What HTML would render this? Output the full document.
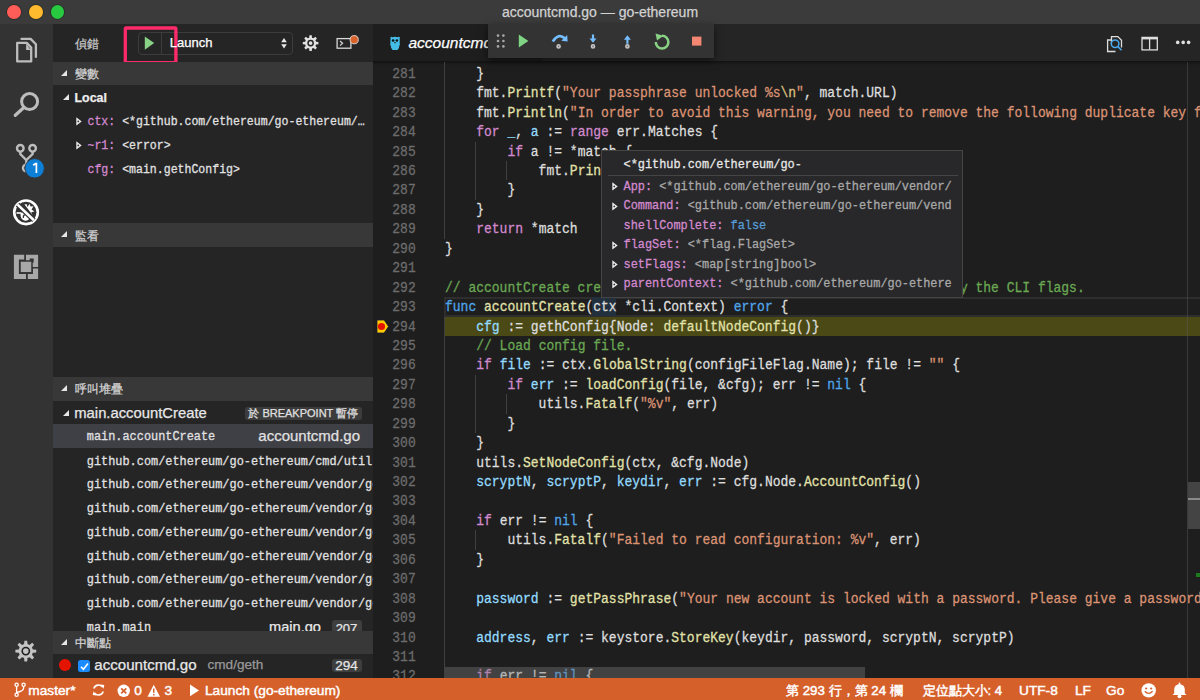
<!DOCTYPE html>
<html><head><meta charset="utf-8">
<style>
*{margin:0;padding:0;box-sizing:border-box}
html,body{width:1200px;height:700px;overflow:hidden;background:#1e1e1e;font-family:"Liberation Sans",sans-serif;}
body *{-webkit-text-stroke:0.25px currentColor}
.abs{position:absolute}
#title{left:0;top:0;width:1200px;height:24px;background:#3b3b3b;}
.tl{position:absolute;top:5px;width:13.5px;height:13.5px;border-radius:50%;box-shadow:0 0 0 0.7px rgba(0,0,0,0.35)}
#ttext{position:absolute;left:0;width:1200px;top:4px;text-align:center;color:#d2d2d2;font-size:14px;line-height:16px}
#act{left:0;top:24px;width:53px;height:654px;background:#333333}
#side{left:53px;top:24px;width:320px;height:654px;background:#252526;overflow:hidden}
.sh{position:absolute;left:0;width:320px;height:23.5px;background:#383838;color:#d4d4d4;font-size:11.7px}
.sh .tri{position:absolute;left:8px;top:8px;width:0;height:0;border-left:6.5px solid transparent;border-bottom:6.5px solid #e6e6e6}
.sh .t{position:absolute;left:22px;top:4.3px;line-height:16px}
.row{position:absolute;left:0;width:320px;height:24px;line-height:24px;white-space:pre;color:#e2e2e2}
.row .abs,.hr .abs{top:0}
.sy{transform:scaleY(1.15)}
.mono{font-family:"Liberation Mono",monospace}
.vn{color:#d48ad0}
.tw{position:absolute;width:0;height:0;border-top:4.5px solid transparent;border-bottom:4.5px solid transparent;border-left:6px solid #c5c5c5}
.tw:after{content:"";position:absolute;left:-4.5px;top:-2.5px;border-top:2.5px solid transparent;border-bottom:2.5px solid transparent;border-left:3px solid #252526}
.cs{font-size:11.9px}
#editor{left:373px;top:24px;width:827px;height:654px;background:#1e1e1e;overflow:hidden}
#tabs{left:0;top:0;width:827px;height:37.6px;background:#252526}
#tab{left:0;top:0;width:170px;height:37.6px;background:#1e1e1e}
.ln{position:absolute;left:445px;height:19.44px;line-height:19.44px;white-space:pre;font-family:"Liberation Mono",monospace;font-size:13px;color:#dedede;transform:translateY(0.6px) scaleY(1.16)}
.nm{position:absolute;left:373px;width:42.7px;text-align:right;height:19.44px;line-height:19.44px;font-family:"Liberation Mono",monospace;font-size:13px;color:#6c6c6c;transform:translateY(0.6px) scaleY(1.16)}
.k{color:#d48ad0}.b{color:#50a6ea}.s{color:#dc9374}.f{color:#e2e2aa}.v{color:#94dcff}.c{color:#6aa853}.e{color:#dfc080}
.g{position:absolute;width:1px;background:#404040}
#status{left:0;top:678px;width:1200px;height:24px;background:#d6602a;color:#ffffff;font-size:13.7px}
#status span{position:absolute;top:3.5px;line-height:18px;white-space:pre;-webkit-text-stroke:0.45px #fff}
#hover{left:601px;top:150px;width:362px;height:148px;background:#28282a;border:1px solid #454545;overflow:hidden}
.hr{position:absolute;left:0;width:360px;height:19.5px;line-height:19.5px;white-space:pre;font-family:"Liberation Mono",monospace;font-size:11.9px;color:#a9a9a9}
.hr .tw:after{border-left-color:#252526}
#dbg{left:488px;top:24px;width:226px;height:34px;background:#333333;box-shadow:0 3px 8px rgba(0,0,0,0.55)}
.badge{position:absolute;background:#3e3e3e;color:#e6e6e6;border-radius:3px;font-size:12.5px;line-height:16px;text-align:center}
</style></head><body>
<div id="title" class="abs">
  <div class="tl" style="left:7.3px;background:#fe5e57"></div>
  <div class="tl" style="left:29px;background:#feba2e"></div>
  <div class="tl" style="left:50.6px;background:#28c840"></div>
  <div id="ttext">accountcmd.go — go-ethereum</div>
</div>

<div id="act" class="abs"></div>
<svg class="abs" style="left:0;top:0" width="54" height="700" viewBox="0 0 54 700">
  <g fill="none" stroke="#bdbdbd" stroke-width="2.3" stroke-linejoin="round" stroke-linecap="round">
    <!-- explorer -->
    <path d="M21.5,38.9 H30.6 L35.9,44.3 V56.9"/>
    <path d="M17.2,42.9 H26.7 L31.2,47.6 V61.4 H17.2 Z"/>
  </g>
  <path d="M26.1,43.4 V50 H30.6 Z" fill="#bdbdbd"/>
  <!-- search -->
  <circle cx="29.6" cy="101.5" r="8" fill="none" stroke="#bdbdbd" stroke-width="3"/>
  <line x1="23.6" y1="107.7" x2="15.3" y2="115.3" stroke="#bdbdbd" stroke-width="3.2" stroke-linecap="round"/>
  <!-- git -->
  <g fill="none" stroke="#bdbdbd" stroke-width="2.4">
    <circle cx="20.3" cy="148.3" r="3.3"/>
    <circle cx="32.6" cy="148.3" r="3.3"/>
    <path d="M20.3,151.6 V154 L26.3,160 L32.6,154 V151.6 M26.3,160 V164.5"/>
    <circle cx="26.3" cy="168" r="3.3"/>
  </g>
  <circle cx="34.6" cy="168.3" r="9.7" fill="#0e7fd6" stroke="#333" stroke-width="0.8"/>
  <path d="M33.2,165.3 L35.6,163.6 H36.4 V173" fill="none" stroke="#fff" stroke-width="1.7"/>
  <!-- debug -->
  <circle cx="26" cy="212.3" r="11.8" fill="none" stroke="#ffffff" stroke-width="2.6"/>
  <path d="M20.5,214.5 Q21,211.5 24,211.8 L29.5,217.5 Q28.8,221 25,220.8 Q20.6,220 20.5,214.5 Z" fill="#ffffff"/>
  <path d="M23.5,218 Q22.8,215.5 24.8,214.6" fill="none" stroke="#333" stroke-width="1.2"/>
  <path d="M16.5,213 H21" stroke="#ffffff" stroke-width="1.6"/>
  <path d="M24.5,204.5 L26.5,204 L27.5,207 L29.5,203.8 L30.5,206.5 L33.5,206.3 L31.5,209.5 L34.5,211.5 L31.2,212.3 L32.5,215 Z" fill="#ffffff"/>
  <line x1="17.6" y1="204.6" x2="33.9" y2="220.3" stroke="#333333" stroke-width="5"/>
  <line x1="17.6" y1="204.6" x2="33.9" y2="220.3" stroke="#ffffff" stroke-width="2.6"/>
  <!-- extensions -->
  <g fill="#a8a8a8">
    <path d="M13.9,254.8 H24.2 V259.6 H18.9 V274 H26 V279 H13.9 Z"/>
    <path d="M26,254.8 H38.1 V266.9 H26 Z M29.7,258.5 V262.4 H33.7 V258.5 Z" fill-rule="evenodd"/>
    <path d="M32.9,268.5 H38.1 V279 H27.8 V274 H32.9 Z"/>
    <rect x="20" y="261" width="12" height="11.8" stroke="#333333" stroke-width="1.5"/>
  </g>
  <!-- gear -->
  <g transform="translate(25.8,651.1)">
    <path d="M-1.71,-6.99 L-1.36,-10.41 L1.36,-10.41 L1.71,-6.99 L3.74,-6.16 L6.40,-8.32 L8.32,-6.40 L6.16,-3.74 L6.99,-1.71 L10.41,-1.36 L10.41,1.36 L6.99,1.71 L6.16,3.74 L8.32,6.40 L6.40,8.32 L3.74,6.16 L1.71,6.99 L1.36,10.41 L-1.36,10.41 L-1.71,6.99 L-3.74,6.16 L-6.40,8.32 L-8.32,6.40 L-6.16,3.74 L-6.99,1.71 L-10.41,1.36 L-10.41,-1.36 L-6.99,-1.71 L-6.16,-3.74 L-8.32,-6.40 L-6.40,-8.32 L-3.74,-6.16 Z" fill="#c4c4c4"/>
    <circle r="3.6" fill="none" stroke="#1e1e1e" stroke-width="1.6"/>
  </g>
</svg>

<div id="side" class="abs">
  <div class="abs" style="left:22px;top:11.8px;color:#c4c4c4;font-size:11.6px;line-height:16px">偵錯</div>
  <!-- dropdown -->
  <div class="abs" style="left:84.8px;top:7.5px;width:155.3px;height:23.2px;border:1px solid #3c3c3c;border-radius:4px"></div>
  <div class="abs" style="left:107.5px;top:8px;width:1px;height:22.5px;background:#3c3c3c"></div>
  <svg class="abs" style="left:0;top:0" width="320" height="40" viewBox="0 0 320 40">
    <path d="M91.8,12.5 L101.2,19 L91.8,25.7 Z" fill="#89d185"/>
    <path d="M228.2,18.2 L231,14 L233.8,18.2 Z M228.2,20.3 L233.8,20.3 L231,24.4 Z" fill="#e8e8e8"/>
    <g transform="translate(257.6,19.1)">
      <path d="M-1.39,-5.43 L-1.18,-7.81 L1.18,-7.81 L1.39,-5.43 L2.86,-4.82 L4.69,-6.36 L6.36,-4.69 L4.82,-2.86 L5.43,-1.39 L7.81,-1.18 L7.81,1.18 L5.43,1.39 L4.82,2.86 L6.36,4.69 L4.69,6.36 L2.86,4.82 L1.39,5.43 L1.18,7.81 L-1.18,7.81 L-1.39,5.43 L-2.86,4.82 L-4.69,6.36 L-6.36,4.69 L-4.82,2.86 L-5.43,1.39 L-7.81,1.18 L-7.81,-1.18 L-5.43,-1.39 L-4.82,-2.86 L-6.36,-4.69 L-4.69,-6.36 L-2.86,-4.82 Z" fill="#e2e2e2"/>
      <circle r="2.6" fill="none" stroke="#252526" stroke-width="1.5"/>
    </g>
    <rect x="284.1" y="14.6" width="13.8" height="9.6" fill="none" stroke="#d8d8d8" stroke-width="1.3"/>
    <path d="M287,17 L289.6,19.3 L287,21.6" fill="none" stroke="#d8d8d8" stroke-width="1.2"/>
    <circle cx="301.2" cy="15.7" r="4.1" fill="#d9622b" stroke="#e0e0e0" stroke-width="0.9"/>
    <rect x="72.3" y="4" width="50.6" height="34.6" rx="1" fill="none" stroke="#ff2a6a" stroke-width="3.3"/>
  </svg>
  <div class="abs" style="left:116.8px;top:11px;color:#ffffff;font-size:13px;line-height:16px">Launch</div>

  <div class="sh" style="top:37.5px"><div class="tri"></div><div class="t">變數</div></div>
  <div class="row" style="top:61.3px;"><div class="abs" style="left:9.5px;top:9px;width:0;height:0;border-left:6.5px solid transparent;border-bottom:6.5px solid #e6e6e6"></div><span class="abs" style="left:21.5px;top:0.8px;font-weight:bold;font-size:12.4px;color:#eeeeee">Local</span></div>
  <div class="row mono" style="top:85.3px;font-size:11.55px"><svg class="abs" style="left:23px;top:7.3px" width="7" height="10" viewBox="0 0 7 10"><path d="M0.3,0.3 L5.7,4.4 L0.3,8.5 Z" fill="#eeeeee"/><circle cx="2.3" cy="4.4" r="0.9" fill="#333"/></svg><span class="abs sy" style="left:34.5px;top:1px"><span class="vn">ctx:</span> &lt;*github.com/ethereum/go-ethereum/…</span></div>
  <div class="row mono" style="top:109.3px;font-size:11.55px"><svg class="abs" style="left:23px;top:7.3px" width="7" height="10" viewBox="0 0 7 10"><path d="M0.3,0.3 L5.7,4.4 L0.3,8.5 Z" fill="#eeeeee"/><circle cx="2.3" cy="4.4" r="0.9" fill="#333"/></svg><span class="abs sy" style="left:34.5px;top:1px"><span class="vn">~r1:</span> &lt;error&gt;</span></div>
  <div class="row mono" style="top:133.3px;font-size:11.55px"><span class="abs sy" style="left:34.5px;top:1px"><span class="vn">cfg:</span> &lt;main.gethConfig&gt;</span></div>

  <div class="sh" style="top:199.3px"><div class="tri"></div><div class="t">監看</div></div>

  <div class="sh" style="top:353px"><div class="tri"></div><div class="t">呼叫堆疊</div></div>
  <div class="row" style="top:377.3px"><div class="abs" style="left:9.5px;top:9px;width:0;height:0;border-left:6.5px solid transparent;border-bottom:6.5px solid #e6e6e6"></div><span class="abs" style="left:21.3px;font-size:14.8px;color:#e8e8e8">main.accountCreate</span>
    <div class="abs" style="left:192px;top:6px;width:116.5px;height:12.8px;background:#3c3c3c;border-radius:2.5px;color:#e0e0e0;font-size:11px;line-height:12.8px;text-align:center">於 BREAKPOINT 暫停</div></div>
  <div class="row" style="top:400.1px;height:23.9px;background:#3f3f46"><span class="abs mono cs sy" style="left:33.8px;top:0.7px">main.accountCreate</span><span class="abs" style="left:205.3px;font-size:15px;color:#e0e0e0">accountcmd.go</span></div>
  <div class="row mono cs" style="top:425.6px"><span class="abs sy" style="left:33.8px">github.com/ethereum/go-ethereum/cmd/utils.MigrateFlags.func1</span></div>
  <div class="row mono cs" style="top:449.3px"><span class="abs sy" style="left:33.8px">github.com/ethereum/go-ethereum/vendor/gopkg.in/urfave/cli%2ev1.HandleAction</span></div>
  <div class="row mono cs" style="top:473.1px"><span class="abs sy" style="left:33.8px">github.com/ethereum/go-ethereum/vendor/gopkg.in/urfave/cli%2ev1.Command.Run</span></div>
  <div class="row mono cs" style="top:496.8px"><span class="abs sy" style="left:33.8px">github.com/ethereum/go-ethereum/vendor/gopkg.in/urfave/cli%2ev1.(*App).RunAsSubcommand</span></div>
  <div class="row mono cs" style="top:520.6px"><span class="abs sy" style="left:33.8px">github.com/ethereum/go-ethereum/vendor/gopkg.in/urfave/cli%2ev1.Command.startApp</span></div>
  <div class="row mono cs" style="top:544.3px"><span class="abs sy" style="left:33.8px">github.com/ethereum/go-ethereum/vendor/gopkg.in/urfave/cli%2ev1.Command.Run</span></div>
  <div class="row mono cs" style="top:568.1px"><span class="abs sy" style="left:33.8px">github.com/ethereum/go-ethereum/vendor/gopkg.in/urfave/cli%2ev1.(*App).Run</span></div>
  <div class="row mono cs" style="top:591.8px"><span class="abs sy" style="left:33.8px">main.main</span><span class="abs" style="left:216px;top:-0.8px;font-family:'Liberation Sans';font-size:14.6px;color:#e8e8e8">main.go</span><div class="badge" style="left:278.5px;top:4px;width:30px;height:17px;line-height:17px;font-family:'Liberation Sans';font-size:13px">207</div></div>

  <div class="sh" style="top:606.5px"><div class="tri"></div><div class="t">中斷點</div></div>
  <div class="row" style="top:630px;height:24px">
    <div class="abs" style="left:6px;top:5.3px;width:11.6px;height:11.6px;border-radius:50%;background:#e51400"></div>
    <div class="abs" style="left:24.5px;top:5.5px;width:12.8px;height:12.6px;border-radius:2.5px;background:#1a8cff"></div>
    <svg class="abs" style="left:24.5px;top:5.5px" width="13" height="13" viewBox="0 0 13 13"><path d="M3,6.8 L5.4,9.3 L10,3.6" fill="none" stroke="#fff" stroke-width="1.6"/></svg>
    <span class="abs" style="left:41.3px;top:-1px;font-size:15.1px;color:#e8e8e8">accountcmd.go</span>
    <span class="abs" style="left:154.5px;top:-1px;font-size:13.6px;color:#999999">cmd/geth</span>
    <div class="badge" style="left:278.5px;top:4.5px;width:30px;height:13.5px;line-height:13.5px;font-size:13.5px">294</div>
  </div>
</div>

<div id="editor" class="abs">
  <div id="tabs" class="abs"><div id="tab" class="abs"></div></div>
  <svg class="abs" style="left:0;top:0" width="827" height="40" viewBox="0 0 827 40">
    <path d="M17.6,14.5 Q16.6,13.2 18.2,12.9 Q19,12.6 19.6,13.3 Q22,12.3 24.6,13.3 Q25.4,12.6 26.3,12.9 Q27.6,13.4 26.6,14.6 Q27,17 26.6,19 L27.1,20.5 L26.5,21 Q26.3,24.5 24.5,25.9 L19.6,25.9 Q17.8,24.5 17.6,21 L17,20.5 L17.5,19 Q17.2,17 17.6,14.5 Z" fill="#45bce6"/>
    <circle cx="20.1" cy="16.5" r="1.3" fill="#111"/><circle cx="23.9" cy="16.5" r="1.3" fill="#111"/>
    <ellipse cx="22" cy="18.7" rx="0.9" ry="0.6" fill="#222"/>
    <g fill="none" stroke="#dddddd" stroke-width="1.3">
      <path d="M738.5,16 H734.6 V27.5 H742.5"/>
      <path d="M738.5,20 V12.6 H744.8 L748.5,16.3 V23.5"/>
    </g>
    <circle cx="742.1" cy="19.7" r="3.8" fill="#252526" stroke="#4aa9f0" stroke-width="1.5"/>
    <line x1="744.8" y1="22.5" x2="748.5" y2="26.3" stroke="#4aa9f0" stroke-width="1.6"/>
    <rect x="769" y="13.4" width="15.3" height="12.5" fill="none" stroke="#dddddd" stroke-width="1.3"/>
    <rect x="769" y="13.4" width="15.3" height="2" fill="#dddddd"/>
    <line x1="776.6" y1="14" x2="776.6" y2="25.5" stroke="#dddddd" stroke-width="1.3"/>
    <circle cx="804.7" cy="18.4" r="1.8" fill="#e0e0e0"/><circle cx="810.2" cy="18.4" r="1.8" fill="#e0e0e0"/><circle cx="815.6" cy="18.4" r="1.8" fill="#e0e0e0"/>
  </svg>
  <div class="abs" style="left:35.5px;top:9.5px;color:#ffffff;font-style:italic;font-size:15.5px;line-height:18px;white-space:pre">accountcmd.go</div>
  <div class="abs" style="left:0;top:37.1px;width:827px;height:1.3px;background:#141414"></div><div class="abs" style="left:0;top:38.4px;width:827px;height:2.5px;background:linear-gradient(rgba(0,0,0,0.3),rgba(0,0,0,0))"></div>

  <div class="abs" id="code" style="left:-373px;top:-24px;width:1200px;height:702px">
<div class="g" style="left:443.70px;top:61.50px;height:21.74px"></div>
<div class="g" style="left:443.70px;top:83.24px;height:19.44px"></div>
<div class="g" style="left:443.70px;top:102.68px;height:19.44px"></div>
<div class="g" style="left:443.70px;top:122.12px;height:19.44px"></div>
<div class="g" style="left:443.70px;top:141.56px;height:19.44px"></div>
<div class="g" style="left:474.90px;top:141.56px;height:19.44px"></div>
<div class="g" style="left:443.70px;top:161.00px;height:19.44px"></div>
<div class="g" style="left:474.90px;top:161.00px;height:19.44px"></div>
<div class="g" style="left:506.11px;top:161.00px;height:19.44px"></div>
<div class="g" style="left:443.70px;top:180.44px;height:19.44px"></div>
<div class="g" style="left:474.90px;top:180.44px;height:19.44px"></div>
<div class="g" style="left:443.70px;top:199.88px;height:19.44px"></div>
<div class="g" style="left:443.70px;top:219.32px;height:19.44px"></div>
<div class="g" style="left:443.70px;top:316.52px;height:19.44px"></div>
<div class="g" style="left:443.70px;top:335.96px;height:19.44px"></div>
<div class="g" style="left:443.70px;top:355.40px;height:19.44px"></div>
<div class="g" style="left:443.70px;top:374.84px;height:19.44px"></div>
<div class="g" style="left:474.90px;top:374.84px;height:19.44px"></div>
<div class="g" style="left:443.70px;top:394.28px;height:19.44px"></div>
<div class="g" style="left:474.90px;top:394.28px;height:19.44px"></div>
<div class="g" style="left:506.11px;top:394.28px;height:19.44px"></div>
<div class="g" style="left:443.70px;top:413.72px;height:19.44px"></div>
<div class="g" style="left:474.90px;top:413.72px;height:19.44px"></div>
<div class="g" style="left:443.70px;top:433.16px;height:19.44px"></div>
<div class="g" style="left:443.70px;top:452.60px;height:19.44px"></div>
<div class="g" style="left:443.70px;top:472.04px;height:19.44px"></div>
<div class="g" style="left:443.70px;top:491.48px;height:19.44px"></div>
<div class="g" style="left:443.70px;top:510.92px;height:19.44px"></div>
<div class="g" style="left:443.70px;top:530.36px;height:19.44px"></div>
<div class="g" style="left:474.90px;top:530.36px;height:19.44px"></div>
<div class="g" style="left:443.70px;top:549.80px;height:19.44px"></div>
<div class="g" style="left:443.70px;top:569.24px;height:19.44px"></div>
<div class="g" style="left:443.70px;top:588.68px;height:19.44px"></div>
<div class="g" style="left:443.70px;top:608.12px;height:19.44px"></div>
<div class="g" style="left:443.70px;top:627.56px;height:19.44px"></div>
<div class="g" style="left:443.70px;top:647.00px;height:19.44px"></div>
<div class="g" style="left:443.70px;top:666.44px;height:19.44px"></div>
<div class="abs" style="left:444px;top:297.08px;width:756px;height:19.44px;border:2px solid #2e2e2e;border-right:none"></div>
<div class="abs" style="left:444.5px;top:316.52px;width:755.5px;height:19.44px;background:#4b4a16"></div>
<div class="abs" style="left:592px;top:297px;width:23.8px;height:19px;background:#22303d"></div>
<svg class="abs" style="left:376px;top:318.72px" width="14" height="16" viewBox="0 0 14 16"><path d="M1,1 H8.2 L12.5,7.5 L8.2,14 H1 Z" fill="#ffcc00" stroke="#1a1a3a" stroke-width="0.8"/><circle cx="5.5" cy="7.5" r="3.6" fill="#e51400"/></svg>
<div class="abs" style="left:1187.5px;top:481.5px;width:12.5px;height:47.5px;background:#444444"></div>
<div class="abs" style="left:1188px;top:498px;width:12px;height:1.5px;background:#8a8a8a"></div>
<div class="abs" style="left:1196px;top:572.5px;width:4px;height:4.5px;background:#1d7a1d"></div>
<div class="nm" style="top:63.80px">281</div>
<div class="nm" style="top:83.24px">282</div>
<div class="nm" style="top:102.68px">283</div>
<div class="nm" style="top:122.12px">284</div>
<div class="nm" style="top:141.56px">285</div>
<div class="nm" style="top:161.00px">286</div>
<div class="nm" style="top:180.44px">287</div>
<div class="nm" style="top:199.88px">288</div>
<div class="nm" style="top:219.32px">289</div>
<div class="nm" style="top:238.76px">290</div>
<div class="nm" style="top:258.20px">291</div>
<div class="nm" style="top:277.64px">292</div>
<div class="nm" style="top:297.08px">293</div>
<div class="nm" style="top:316.52px">294</div>
<div class="nm" style="top:335.96px">295</div>
<div class="nm" style="top:355.40px">296</div>
<div class="nm" style="top:374.84px">297</div>
<div class="nm" style="top:394.28px">298</div>
<div class="nm" style="top:413.72px">299</div>
<div class="nm" style="top:433.16px">300</div>
<div class="nm" style="top:452.60px">301</div>
<div class="nm" style="top:472.04px">302</div>
<div class="nm" style="top:491.48px">303</div>
<div class="nm" style="top:510.92px">304</div>
<div class="nm" style="top:530.36px">305</div>
<div class="nm" style="top:549.80px">306</div>
<div class="nm" style="top:569.24px">307</div>
<div class="nm" style="top:588.68px">308</div>
<div class="nm" style="top:608.12px">309</div>
<div class="nm" style="top:627.56px">310</div>
<div class="nm" style="top:647.00px">311</div>
<div class="nm" style="top:666.44px">312</div>
<div class="ln" style="top:63.80px">    }</div>
<div class="ln" style="top:83.24px">    fmt.<span class="f">Printf</span>(<span class="s">&quot;Your passphrase unlocked %s</span><span class="e">\n</span><span class="s">&quot;</span>, match.URL)</div>
<div class="ln" style="top:102.68px">    fmt.<span class="f">Println</span>(<span class="s">&quot;In order to avoid this warning, you need to remove the following duplicate key files:&quot;</span>)</div>
<div class="ln" style="top:122.12px">    <span class="k">for</span> <span class="v">_</span>, <span class="v">a</span> := <span class="k">range</span> err.Matches {</div>
<div class="ln" style="top:141.56px">        <span class="k">if</span> a != *match {</div>
<div class="ln" style="top:161.00px">            fmt.<span class="f">Println</span>(<span class="s">&quot;  &quot;</span>, a.URL)</div>
<div class="ln" style="top:180.44px">        }</div>
<div class="ln" style="top:199.88px">    }</div>
<div class="ln" style="top:219.32px">    <span class="k">return</span> *match</div>
<div class="ln" style="top:238.76px">}</div>
<div class="ln" style="top:258.20px"></div>
<div class="ln" style="top:277.64px"><span class="c">// accountCreate creates a new account into the keystore defined by the CLI flags.</span></div>
<div class="ln" style="top:297.08px"><span class="b">func</span> <span class="f">accountCreate</span>(ctx *cli.Context) <span class="b">error</span> {</div>
<div class="ln" style="top:316.52px">    <span class="v">cfg</span> := gethConfig{Node: <span class="f">defaultNodeConfig</span>()}</div>
<div class="ln" style="top:335.96px">    <span class="c">// Load config file.</span></div>
<div class="ln" style="top:355.40px">    <span class="k">if</span> <span class="v">file</span> := ctx.<span class="f">GlobalString</span>(configFileFlag.Name); file != <span class="s">&quot;&quot;</span> {</div>
<div class="ln" style="top:374.84px">        <span class="k">if</span> <span class="v">err</span> := <span class="f">loadConfig</span>(file, &amp;cfg); err != <span class="b">nil</span> {</div>
<div class="ln" style="top:394.28px">            utils.<span class="f">Fatalf</span>(<span class="s">&quot;%v&quot;</span>, err)</div>
<div class="ln" style="top:413.72px">        }</div>
<div class="ln" style="top:433.16px">    }</div>
<div class="ln" style="top:452.60px">    utils.<span class="f">SetNodeConfig</span>(ctx, &amp;cfg.Node)</div>
<div class="ln" style="top:472.04px">    <span class="v">scryptN</span>, <span class="v">scryptP</span>, <span class="v">keydir</span>, <span class="v">err</span> := cfg.Node.<span class="f">AccountConfig</span>()</div>
<div class="ln" style="top:491.48px"></div>
<div class="ln" style="top:510.92px">    <span class="k">if</span> err != <span class="b">nil</span> {</div>
<div class="ln" style="top:530.36px">        utils.<span class="f">Fatalf</span>(<span class="s">&quot;Failed to read configuration: %v&quot;</span>, err)</div>
<div class="ln" style="top:549.80px">    }</div>
<div class="ln" style="top:569.24px"></div>
<div class="ln" style="top:588.68px">    <span class="v">password</span> := <span class="f">getPassPhrase</span>(<span class="s">&quot;Your new account is locked with a password. Please give a password. Do not forget this password.&quot;</span>, <span class="b">true</span>, 0, utils.<span class="f">MakePasswordList</span>(ctx))</div>
<div class="ln" style="top:608.12px"></div>
<div class="ln" style="top:627.56px">    <span class="v">address</span>, <span class="v">err</span> := keystore.<span class="f">StoreKey</span>(keydir, password, scryptN, scryptP)</div>
<div class="ln" style="top:647.00px"></div>
<div class="ln" style="top:666.44px">    <span class="k">if</span> err != <span class="b">nil</span> {</div>
<div class="abs" style="left:445px;top:667.2px;width:420px;height:11px;background:rgba(121,121,121,0.4)"></div>
<div class="abs" style="left:1187px;top:61.5px;width:1px;height:617px;background:rgba(90,90,90,0.45)"></div>
  </div>
</div>

<div id="hover" class="abs">
  <div class="hr sy" style="left:21.5px;top:4.5px;color:#e8e8e8">&lt;*github.com/ethereum/go-</div>
  <div class="abs" style="left:5.5px;top:24px;width:350px;height:1px;background:#454545"></div>
  <div class="hr" style="top:26.9px"><svg class="abs" style="left:9.5px;top:4.2px" width="7" height="10" viewBox="0 0 7 10"><path d="M0.3,0.3 L5.7,4.4 L0.3,8.5 Z" fill="#eeeeee"/><circle cx="2.3" cy="4.4" r="0.9" fill="#333"/></svg><span class="abs sy" style="left:21.5px"><span class="vn">App:</span> &lt;*github.com/ethereum/go-ethereum/vendor/</span></div>
  <div class="hr" style="top:46.4px"><svg class="abs" style="left:9.5px;top:4.2px" width="7" height="10" viewBox="0 0 7 10"><path d="M0.3,0.3 L5.7,4.4 L0.3,8.5 Z" fill="#eeeeee"/><circle cx="2.3" cy="4.4" r="0.9" fill="#333"/></svg><span class="abs sy" style="left:21.5px"><span class="vn">Command:</span> &lt;github.com/ethereum/go-ethereum/vend</span></div>
  <div class="hr" style="top:65.9px"><span class="abs sy" style="left:21.5px"><span class="vn">shellComplete:</span> <span style="color:#569cd6">false</span></span></div>
  <div class="hr" style="top:85.4px"><svg class="abs" style="left:9.5px;top:4.2px" width="7" height="10" viewBox="0 0 7 10"><path d="M0.3,0.3 L5.7,4.4 L0.3,8.5 Z" fill="#eeeeee"/><circle cx="2.3" cy="4.4" r="0.9" fill="#333"/></svg><span class="abs sy" style="left:21.5px"><span class="vn">flagSet:</span> &lt;*flag.FlagSet&gt;</span></div>
  <div class="hr" style="top:104.9px"><svg class="abs" style="left:9.5px;top:4.2px" width="7" height="10" viewBox="0 0 7 10"><path d="M0.3,0.3 L5.7,4.4 L0.3,8.5 Z" fill="#eeeeee"/><circle cx="2.3" cy="4.4" r="0.9" fill="#333"/></svg><span class="abs sy" style="left:21.5px"><span class="vn">setFlags:</span> &lt;map[string]bool&gt;</span></div>
  <div class="hr" style="top:124.4px"><svg class="abs" style="left:9.5px;top:4.2px" width="7" height="10" viewBox="0 0 7 10"><path d="M0.3,0.3 L5.7,4.4 L0.3,8.5 Z" fill="#eeeeee"/><circle cx="2.3" cy="4.4" r="0.9" fill="#333"/></svg><span class="abs sy" style="left:21.5px"><span class="vn">parentContext:</span> &lt;*github.com/ethereum/go-ethere</span></div>
</div>

<div id="dbg" class="abs">
  <svg width="226" height="34" viewBox="0 0 226 34">
    <g fill="#a8a8a8"><circle cx="10" cy="11.6" r="1.3"/><circle cx="15.4" cy="11.6" r="1.3"/><circle cx="10" cy="17" r="1.3"/><circle cx="15.4" cy="17" r="1.3"/><circle cx="10" cy="22.4" r="1.3"/><circle cx="15.4" cy="22.4" r="1.3"/></g>
    <path d="M30.8,10.6 L40.4,17 L30.8,23.4 Z" fill="#7fd584"/>
    <path d="M64.8,17.5 Q70.5,8.5 77,14.5" fill="none" stroke="#75beff" stroke-width="2.6"/>
    <path d="M73.3,16.8 L79.6,17.6 L79.2,11 Z" fill="#75beff"/>
    <circle cx="70.6" cy="22.4" r="2.3" fill="#c5c5c5"/><circle cx="70.6" cy="22.4" r="0.8" fill="#777"/>
    <path d="M105,10.5 V16.5" stroke="#75beff" stroke-width="2.2"/><path d="M101.5,14.5 L105,18.8 L108.5,14.5 Z" fill="#75beff"/>
    <circle cx="105" cy="22.4" r="2.3" fill="#c5c5c5"/><circle cx="105" cy="22.4" r="0.8" fill="#777"/>
    <path d="M139.4,14.2 V19.8" stroke="#75beff" stroke-width="2.2"/><path d="M135.9,15.8 L139.4,11.3 L142.9,15.8 Z" fill="#75beff"/>
    <circle cx="139.4" cy="22.4" r="2.3" fill="#c5c5c5"/><circle cx="139.4" cy="22.4" r="0.8" fill="#777"/>
    <path d="M174,11.8 A6.3,6.3 0 1 1 167.8,18" fill="none" stroke="#89d185" stroke-width="2.5"/>
    <path d="M167.5,9.5 L175.5,11.8 L169,16.5 Z" fill="#89d185"/>
    <rect x="204" y="12.6" width="9.4" height="9" fill="#f48771"/>
  </svg>
</div>

<div id="status" class="abs">
  <svg class="abs" style="left:0;top:0" width="420" height="24" viewBox="0 0 420 24">
    <g fill="none" stroke="#fff" stroke-width="1.3">
      <circle cx="16.6" cy="6.8" r="1.6"/><circle cx="23.6" cy="6.8" r="1.6"/><circle cx="16.6" cy="16.8" r="1.6"/>
      <path d="M16.6,8.4 V15.2 M23.6,8.4 V10 Q23.6,13 17,14.5"/>
    </g>
    <g fill="none" stroke="#fff" stroke-width="1.6">
      <path d="M93.8,10.5 A5,5 0 0 1 102.5,9"/>
      <path d="M103.2,13.5 A5,5 0 0 1 94.5,15"/>
    </g>
    <path d="M100.5,6.5 L104.3,7 L103.5,10.8 Z M96.5,17.5 L92.7,17 L93.5,13.2 Z" fill="#fff"/>
    <circle cx="123.75" cy="12.8" r="6.2" fill="#fff"/>
    <path d="M121.2,10.3 L126.3,15.3 M126.3,10.3 L121.2,15.3" stroke="#d6602a" stroke-width="1.7"/>
    <path d="M153.75,6.8 L160,18.7 H147.5 Z" fill="#fff"/>
    <path d="M153.75,10.5 V14.8 M153.75,16 V17.5" stroke="#d6602a" stroke-width="1.5"/>
    <path d="M190,6.5 L199,12.4 L190,18.3 Z" fill="#fff"/>
  </svg>
  <span style="left:28.3px">master*</span>
  <span style="left:134.2px">0</span>
  <span style="left:164.6px">3</span>
  <span style="left:205px">Launch (go-ethereum)</span>
  <span style="left:786px;font-size:13.3px">第 293 行，第 24 欄</span>
  <span style="left:922.5px;font-size:13.1px">定位點大小: 4</span>
  <span style="left:1019px">UTF-8</span>
  <span style="left:1075px">LF</span>
  <span style="left:1106px">Go</span>
  <svg class="abs" style="left:1130px;top:0" width="70" height="24" viewBox="0 0 70 24">
    <circle cx="18.7" cy="12.4" r="7.2" fill="#fff"/>
    <circle cx="16.2" cy="10.5" r="1.1" fill="#d6602a"/><circle cx="21.2" cy="10.5" r="1.1" fill="#d6602a"/>
    <path d="M14.8,13.3 Q18.7,17.5 22.6,13.3" fill="none" stroke="#d6602a" stroke-width="1.4"/>
    <path d="M42.5,17 H56.5 L54.8,15.2 V11.5 Q54.8,6.8 49.5,6 Q44.2,6.8 44.2,11.5 V15.2 Z" fill="#fff"/>
    <circle cx="49.5" cy="18.3" r="1.9" fill="#fff"/><rect x="48.7" y="4.6" width="1.6" height="2" fill="#fff"/>
  </svg>
</div>
</body></html>
